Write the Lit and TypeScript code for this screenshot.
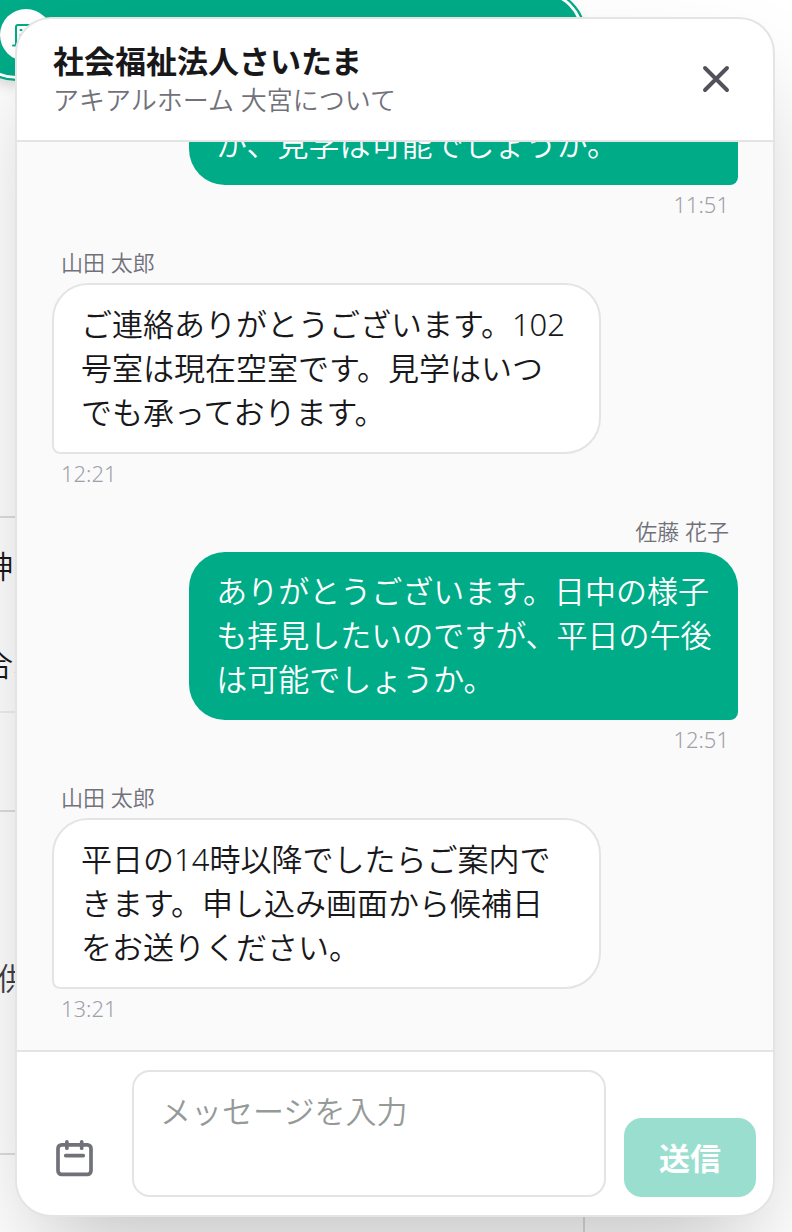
import { LitElement, html, css, svg, nothing } from "lit";
import { customElement, property, state } from "lit/decorators.js";
import { classMap } from "lit/directives/class-map.js";

interface Message {
  author: string;
  text: string;
  time: string;
  mine: boolean;
}

const messages: Message[] = [
  { author: "", text: "が、見学は可能でしょうか。", time: "11:51", mine: true },
  {
    author: "山田 太郎",
    text: "ご連絡ありがとうございます。102号室は現在空室です。見学はいつでも承っております。",
    time: "12:21",
    mine: false,
  },
  {
    author: "佐藤 花子",
    text: "ありがとうございます。日中の様子も拝見したいのですが、平日の午後は可能でしょうか。",
    time: "12:51",
    mine: true,
  },
  {
    author: "山田 太郎",
    text: "平日の14時以降でしたらご案内できます。申し込み画面から候補日をお送りください。",
    time: "13:21",
    mine: false,
  },
];

const closeIcon = svg`<svg viewBox="0 0 48 48" width="48" height="48" aria-hidden="true">
  <path d="M13 13 35 35M35 13 13 35" fill="none" stroke="currentColor" stroke-width="3.9" stroke-linecap="round"/>
</svg>`;

const calendarIcon = svg`<svg viewBox="0 0 44 44" width="44" height="44" aria-hidden="true">
  <g fill="none" stroke="currentColor" stroke-width="3.7" stroke-linecap="round" stroke-linejoin="round">
    <rect x="5" y="8.8" width="33" height="29.6" rx="3.6"/>
    <path d="M13.9 5.8v6.4M28.7 5.8v6.4M12.7 19.6h17.6"/>
  </g>
</svg>`;

const buildingIcon = svg`<svg viewBox="0 0 28 28" width="28" height="28" aria-hidden="true">
  <g fill="none" stroke="currentColor" stroke-width="2" stroke-linecap="round" stroke-linejoin="round">
    <path d="M4 24.500V6a2 2 0 0 1 2-2h11a2 2 0 0 1 2 2v18.500M1 24.500h26"/>
    <path d="M8.500 9h1M13.500 9h1M8.500 14h1M13.500 14h1"/>
  </g>
</svg>`;

@customElement("chat-message")
export class ChatMessage extends LitElement {
  @property({ attribute: false }) message!: Message;

  static styles = css`
    :host {
      display: block;
      flex: none;
    }
    .message {
      display: flex;
      flex-direction: column;
      align-items: flex-start;
    }
    .mine {
      align-items: flex-end;
    }
    .author,
    .time {
      padding: 0 9px;
      font-size: 22px;
      line-height: 30px;
    }
    .author {
      margin-bottom: 6px;
      color: #71717a;
    }
    .time {
      margin-top: 4px;
      color: #9f9fa9;
      font-weight: 300;
    }
    .bubble {
      box-sizing: border-box;
      width: 80%;
      margin: 0;
      padding: 17px 25px 18px 27px;
      border: 2px solid #e4e4e4;
      border-radius: 36px 36px 36px 8px;
      background: #fff;
      color: #18181b;
      font-size: 31px;
      line-height: 44px;
    }
    .mine .bubble {
      border: 0;
      border-radius: 36px 36px 8px 36px;
      padding: 17px 25px 19px 27px;
      background: #00ab87;
      color: #fff;
    }
  `;

  render() {
    const { author, text, time, mine } = this.message;
    return html`
      <article class=${classMap({ message: true, mine })}>
        ${author ? html`<span class="author">${author}</span>` : nothing}
        <p class="bubble">${text}</p>
        <time class="time">${time}</time>
      </article>
    `;
  }
}

@customElement("app-root")
export class AppRoot extends LitElement {
  @state() private draft = "";

  static styles = css`
    :host {
      display: block;
      position: relative;
      height: 100vh;
      overflow: hidden;
      background: #fff;
      color: #18181b;
      font-family: "Noto Sans", "Noto Sans CJK JP", sans-serif;
      font-weight: 350;
    }
    button,
    textarea {
      font: inherit;
    }
    button {
      display: flex;
      align-items: center;
      justify-content: center;
      box-sizing: border-box;
      padding: 0;
      border: 0;
      background: none;
      cursor: pointer;
    }

    .page {
      display: flex;
      flex-direction: column;
      width: 585px;
      height: 100%;
    }
    .apply {
      flex: none;
      justify-content: flex-start;
      width: 616px;
      height: 92px;
      margin: -11px 0 0 -30px;
      padding-left: 28px;
      border: 2px solid #00ab87;
      border-radius: 46px;
      background: #00ab87;
      box-shadow: inset 0 0 0 3px #fff, 0 6px 12px rgba(0, 0, 0, 0.12);
    }
    .badge {
      display: flex;
      align-items: center;
      justify-content: center;
      width: 52px;
      height: 52px;
      border-radius: 50%;
      background: #fff;
      color: #00ab87;
    }
    .facts {
      margin-top: 435px;
      border-top: 2px solid #dedede;
      font-size: 31px;
      line-height: 44px;
      white-space: nowrap;
    }
    .fact {
      box-sizing: border-box;
      margin: 0;
      border-bottom: 2px solid #dedede;
    }
    .support {
      height: 195px;
      padding-top: 26px;
      border-color: #efefef;
    }
    .support span {
      display: block;
      margin: 0 0 54px -18px;
    }
    .blank {
      height: 99px;
    }
    .offer {
      height: 343px;
      padding-top: 144px;
      color: #3f3f46;
    }
    .offer span {
      display: block;
      margin-left: -3px;
    }
    .aside {
      flex: 1;
      border-right: 2px solid #dedede;
    }

    .panel {
      position: absolute;
      inset: 17px 17px 15px 15px;
      display: flex;
      flex-direction: column;
      box-sizing: border-box;
      overflow: hidden;
      border: 2px solid #e4e4e4;
      border-radius: 36px;
      background: #fff;
      box-shadow: 0 50px 100px -24px rgba(0, 0, 0, 0.25);
    }
    .header {
      display: flex;
      align-items: center;
      justify-content: space-between;
      padding: 21px 33px 22px 36px;
      border-bottom: 2px solid #e4e4e4;
    }
    .title {
      margin: 0;
      font-size: 31px;
      font-weight: 700;
      line-height: 42px;
    }
    .subtitle {
      margin: 0;
      color: #71717a;
      font-size: 26px;
      line-height: 36px;
    }
    .close {
      color: #52525b;
    }
    .log {
      display: flex;
      flex: 1;
      flex-direction: column;
      justify-content: flex-end;
      gap: 28px;
      min-height: 0;
      padding: 0 35px 27px;
      overflow: hidden;
      background: #fafafa;
    }
    .composer {
      display: flex;
      align-items: flex-end;
      gap: 18px;
      padding: 18px 17px 18px 18px;
      border-top: 2px solid #e4e4e4;
    }
    .schedule {
      flex: none;
      width: 79px;
      height: 79px;
      color: #71717a;
    }
    .input {
      flex: 1;
      box-sizing: border-box;
      min-width: 0;
      height: 127px;
      padding: 17px 26px;
      border: 2px solid #e4e4e4;
      border-radius: 18px;
      outline: 0;
      background: #fff;
      color: #18181b;
      font-size: 31px;
      line-height: 44px;
      resize: none;
    }
    .input::placeholder {
      color: #949a98;
      opacity: 1;
    }
    .send {
      flex: none;
      width: 132px;
      height: 79px;
      border-radius: 18px;
      background: #00ab87;
      color: #fff;
      font-size: 31px;
      font-weight: 700;
      line-height: 44px;
    }
    .send:disabled {
      background: #99decf;
      cursor: default;
    }
  `;

  private onInput(event: Event) {
    this.draft = (event.target as HTMLTextAreaElement).value;
  }

  render() {
    return html`
      <main class="page">
        <button class="apply" type="button" aria-label="申し込み">
          <span class="badge">${buildingIcon}</span>
        </button>
        <div class="facts">
          <p class="fact support"><span>神</span><span>合わ</span></p>
          <p class="fact blank"></p>
          <p class="fact offer"><span>供</span></p>
        </div>
        <div class="aside"></div>
      </main>

      <section class="panel" role="dialog" aria-labelledby="chat-title">
        <header class="header">
          <div>
            <h1 class="title" id="chat-title">社会福祉法人さいたま</h1>
            <p class="subtitle">アキアルホーム 大宮について</p>
          </div>
          <button class="close" type="button" aria-label="閉じる">${closeIcon}</button>
        </header>
        <div class="log" role="log">
          ${messages.map((message) => html`<chat-message .message=${message}></chat-message>`)}
        </div>
        <form class="composer" @submit=${(event: Event) => event.preventDefault()}>
          <button class="schedule" type="button" aria-label="日程">${calendarIcon}</button>
          <textarea
            class="input"
            aria-label="メッセージ"
            placeholder="メッセージを入力"
            .value=${this.draft}
            @input=${this.onInput}
          ></textarea>
          <button class="send" type="submit" ?disabled=${!this.draft.trim()}>送信</button>
        </form>
      </section>
    `;
  }
}
